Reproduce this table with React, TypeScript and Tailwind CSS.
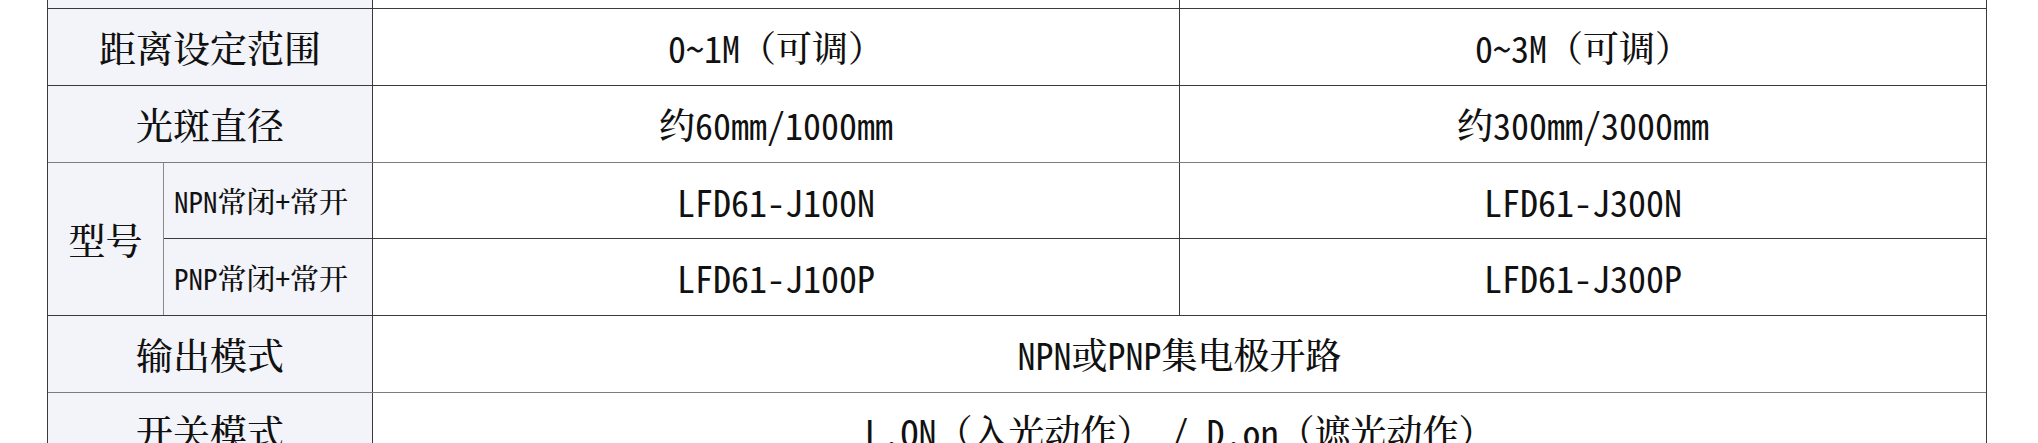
const LATIN = "font-['Noto_Sans_Mono_CJK_SC','Liberation_Mono',monospace]";
const HAN = "font-['Noto_Serif_CJK_SC','Noto_Sans_CJK_SC',serif] font-medium";

// split ascii runs from CJK runs so latin stays half-width and han stays serif
function Mixed({ text }: { text: string }) {
  const runs = text.match(/[\x20-\x7e]+|[^\x20-\x7e]+/g) ?? [];
  return (
    <>
      {runs.map((r, i) => (
        <span key={i} className={/^[\x20-\x7e]/.test(r) ? LATIN : HAN}>
          {r}
        </span>
      ))}
    </>
  );
}

function Label({ text }: { text: string }) {
  return (
    <div className="w-[325px] shrink-0 flex items-center justify-center bg-[#f3f4f9] border-r border-[#3a3a3a] text-[37px]">
      <Mixed text={text} />
    </div>
  );
}

function Value({ text, last = false }: { text: string; last?: boolean }) {
  return (
    <div
      className={
        last
          ? "flex-1 flex items-center justify-center text-[36px] whitespace-pre"
          : "w-[807px] shrink-0 flex items-center justify-center border-r border-[#3a3a3a] text-[36px] whitespace-pre"
      }
    >
      <Mixed text={text} />
    </div>
  );
}

function SubLabel({ text }: { text: string }) {
  return (
    <div className="w-[209px] shrink-0 flex items-center pl-[10px] bg-[#f3f4f9] border-r border-[#3a3a3a] text-[29px]">
      <Mixed text={text} />
    </div>
  );
}

export default function App() {
  return (
    <div className="bg-white w-[2038px] h-[443px] overflow-hidden">
      <div className="ml-[47px] w-[1940px] border-x border-[#3a3a3a] text-[#111] leading-none">
        {/* tail of the row above */}
        <div className="flex h-[9px] border-b border-[#3a3a3a]">
          <div className="w-[325px] shrink-0 bg-[#f3f4f9] border-r border-[#3a3a3a]" />
          <div className="w-[807px] shrink-0 border-r border-[#3a3a3a]" />
          <div className="flex-1" />
        </div>

        <div className="flex h-[77px] border-b border-[#3a3a3a]">
          <Label text="距离设定范围" />
          <Value text="0~1M（可调）" />
          <Value text="0~3M（可调）" last />
        </div>

        <div className="flex h-[77px] border-b border-[#7c7c7c]">
          <Label text="光斑直径" />
          <Value text="约60mm/1000mm" />
          <Value text="约300mm/3000mm" last />
        </div>

        <div className="flex h-[153px] border-b border-[#3a3a3a]">
          <div className="w-[116px] shrink-0 flex items-center justify-center bg-[#f3f4f9] border-r border-[#8a8a8a] text-[37px]">
            <Mixed text="型号" />
          </div>
          <div className="flex-1 flex flex-col">
            <div className="flex h-[76px] border-b border-[#3a3a3a]">
              <SubLabel text="NPN常闭+常开" />
              <Value text="LFD61-J100N" />
              <Value text="LFD61-J300N" last />
            </div>
            <div className="flex h-[76px]">
              <SubLabel text="PNP常闭+常开" />
              <Value text="LFD61-J100P" />
              <Value text="LFD61-J300P" last />
            </div>
          </div>
        </div>

        <div className="flex h-[77px] border-b border-[#7c7c7c]">
          <Label text="输出模式" />
          <Value text="NPN或PNP集电极开路" last />
        </div>

        <div className="flex h-[77px] border-b border-[#3a3a3a]">
          <Label text="开关模式" />
          <Value text="L.ON（入光动作） / D.on（遮光动作）" last />
        </div>
      </div>
    </div>
  );
}
